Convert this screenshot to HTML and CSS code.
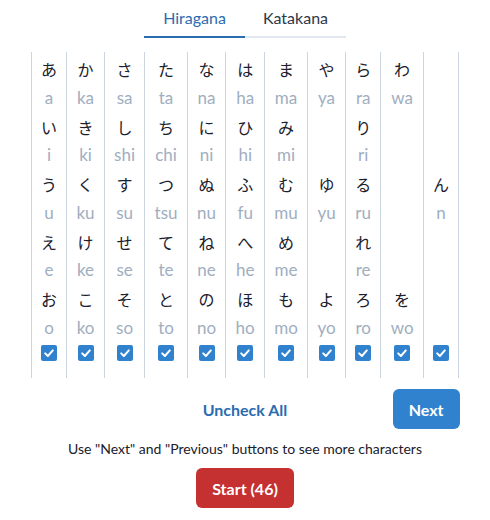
FILE: index.html
```html
<!DOCTYPE html>
<html lang="ja">
<head>
<meta charset="utf-8">
<link rel="stylesheet" href="styles.css">
</head>
<body>
<div class="app">
  <div class="tabs">
    <div class="tab active">Hiragana</div>
    <div class="tab">Katakana</div>
  </div>

  <div class="grid">
    <div class="col">
      <div class="cell"><span class="kana">あ</span><span class="romaji">a</span></div>
      <div class="cell"><span class="kana">い</span><span class="romaji">i</span></div>
      <div class="cell"><span class="kana">う</span><span class="romaji">u</span></div>
      <div class="cell"><span class="kana">え</span><span class="romaji">e</span></div>
      <div class="cell"><span class="kana">お</span><span class="romaji">o</span></div>
      <span class="check"><svg viewBox="0 0 16 16"><path d="M4.2 8.4 L6.9 11 L11.8 5.4"/></svg></span>
    </div>
    <div class="col">
      <div class="cell"><span class="kana">か</span><span class="romaji">ka</span></div>
      <div class="cell"><span class="kana">き</span><span class="romaji">ki</span></div>
      <div class="cell"><span class="kana">く</span><span class="romaji">ku</span></div>
      <div class="cell"><span class="kana">け</span><span class="romaji">ke</span></div>
      <div class="cell"><span class="kana">こ</span><span class="romaji">ko</span></div>
      <span class="check"><svg viewBox="0 0 16 16"><path d="M4.2 8.4 L6.9 11 L11.8 5.4"/></svg></span>
    </div>
    <div class="col">
      <div class="cell"><span class="kana">さ</span><span class="romaji">sa</span></div>
      <div class="cell"><span class="kana">し</span><span class="romaji">shi</span></div>
      <div class="cell"><span class="kana">す</span><span class="romaji">su</span></div>
      <div class="cell"><span class="kana">せ</span><span class="romaji">se</span></div>
      <div class="cell"><span class="kana">そ</span><span class="romaji">so</span></div>
      <span class="check"><svg viewBox="0 0 16 16"><path d="M4.2 8.4 L6.9 11 L11.8 5.4"/></svg></span>
    </div>
    <div class="col">
      <div class="cell"><span class="kana">た</span><span class="romaji">ta</span></div>
      <div class="cell"><span class="kana">ち</span><span class="romaji">chi</span></div>
      <div class="cell"><span class="kana">つ</span><span class="romaji">tsu</span></div>
      <div class="cell"><span class="kana">て</span><span class="romaji">te</span></div>
      <div class="cell"><span class="kana">と</span><span class="romaji">to</span></div>
      <span class="check"><svg viewBox="0 0 16 16"><path d="M4.2 8.4 L6.9 11 L11.8 5.4"/></svg></span>
    </div>
    <div class="col">
      <div class="cell"><span class="kana">な</span><span class="romaji">na</span></div>
      <div class="cell"><span class="kana">に</span><span class="romaji">ni</span></div>
      <div class="cell"><span class="kana">ぬ</span><span class="romaji">nu</span></div>
      <div class="cell"><span class="kana">ね</span><span class="romaji">ne</span></div>
      <div class="cell"><span class="kana">の</span><span class="romaji">no</span></div>
      <span class="check"><svg viewBox="0 0 16 16"><path d="M4.2 8.4 L6.9 11 L11.8 5.4"/></svg></span>
    </div>
    <div class="col">
      <div class="cell"><span class="kana">は</span><span class="romaji">ha</span></div>
      <div class="cell"><span class="kana">ひ</span><span class="romaji">hi</span></div>
      <div class="cell"><span class="kana">ふ</span><span class="romaji">fu</span></div>
      <div class="cell"><span class="kana">へ</span><span class="romaji">he</span></div>
      <div class="cell"><span class="kana">ほ</span><span class="romaji">ho</span></div>
      <span class="check"><svg viewBox="0 0 16 16"><path d="M4.2 8.4 L6.9 11 L11.8 5.4"/></svg></span>
    </div>
    <div class="col">
      <div class="cell"><span class="kana">ま</span><span class="romaji">ma</span></div>
      <div class="cell"><span class="kana">み</span><span class="romaji">mi</span></div>
      <div class="cell"><span class="kana">む</span><span class="romaji">mu</span></div>
      <div class="cell"><span class="kana">め</span><span class="romaji">me</span></div>
      <div class="cell"><span class="kana">も</span><span class="romaji">mo</span></div>
      <span class="check"><svg viewBox="0 0 16 16"><path d="M4.2 8.4 L6.9 11 L11.8 5.4"/></svg></span>
    </div>
    <div class="col">
      <div class="cell"><span class="kana">や</span><span class="romaji">ya</span></div>
      <div class="cell"></div>
      <div class="cell"><span class="kana">ゆ</span><span class="romaji">yu</span></div>
      <div class="cell"></div>
      <div class="cell"><span class="kana">よ</span><span class="romaji">yo</span></div>
      <span class="check"><svg viewBox="0 0 16 16"><path d="M4.2 8.4 L6.9 11 L11.8 5.4"/></svg></span>
    </div>
    <div class="col">
      <div class="cell"><span class="kana">ら</span><span class="romaji">ra</span></div>
      <div class="cell"><span class="kana">り</span><span class="romaji">ri</span></div>
      <div class="cell"><span class="kana">る</span><span class="romaji">ru</span></div>
      <div class="cell"><span class="kana">れ</span><span class="romaji">re</span></div>
      <div class="cell"><span class="kana">ろ</span><span class="romaji">ro</span></div>
      <span class="check"><svg viewBox="0 0 16 16"><path d="M4.2 8.4 L6.9 11 L11.8 5.4"/></svg></span>
    </div>
    <div class="col">
      <div class="cell"><span class="kana">わ</span><span class="romaji">wa</span></div>
      <div class="cell"></div>
      <div class="cell"></div>
      <div class="cell"></div>
      <div class="cell"><span class="kana">を</span><span class="romaji">wo</span></div>
      <span class="check"><svg viewBox="0 0 16 16"><path d="M4.2 8.4 L6.9 11 L11.8 5.4"/></svg></span>
    </div>
    <div class="col">
      <div class="cell"></div>
      <div class="cell"></div>
      <div class="cell"><span class="kana">ん</span><span class="romaji">n</span></div>
      <div class="cell"></div>
      <div class="cell"></div>
      <span class="check"><svg viewBox="0 0 16 16"><path d="M4.2 8.4 L6.9 11 L11.8 5.4"/></svg></span>
    </div>
  </div>

  <div class="actions">
    <span class="spacer"></span>
    <button class="btn ghost">Uncheck All</button>
    <button class="btn primary next">Next</button>
  </div>

  <p class="hint">Use "Next" and "Previous" buttons to see more characters</p>

  <button class="btn danger">Start (46)</button>
</div>
</body>
</html>
```

FILE: styles.css
```css
* { box-sizing: border-box; }

html, body {
  margin: 0;
  padding: 0;
  background: #ffffff;
}

body {
  font-family: Lato, "Noto Sans", "Noto Sans CJK JP", sans-serif;
  color: #1a202c;
}

.app {
  display: flex;
  flex-direction: column;
  align-items: center;
}

.tabs {
  display: flex;
}

.tab {
  width: 101px;
  text-align: center;
  font-size: 16px;
  line-height: 24px;
  padding: 6px 0 6px;
  color: #2d3748;
  border-bottom: 2px solid #e2e8f0;
}

.tab.active {
  color: #2b6cb0;
  border-bottom-color: #2b6cb0;
}

.grid {
  display: flex;
  margin-top: 14px;
  border-right: 1px solid #cbd5e0;
}

.col {
  display: flex;
  flex-direction: column;
  align-items: center;
  padding: 3px 9.25px 17px;
  border-left: 1px solid #cbd5e0;
}

.cell {
  display: flex;
  flex-direction: column;
  align-items: center;
  height: 57.5px;
}

.kana {
  font-family: "Noto Sans CJK JP", sans-serif;
  font-size: 16px;
  line-height: 28.75px;
  color: #1a202c;
}

.romaji {
  font-size: 17px;
  line-height: 28.75px;
  color: #a0aec0;
}

.check {
  display: block;
  width: 16px;
  height: 16px;
  margin-top: 2.5px;
  background: #3182ce;
  border-radius: 2px;
}

.check svg {
  display: block;
  width: 16px;
  height: 16px;
  fill: none;
  stroke: #ffffff;
  stroke-width: 2;
  stroke-linecap: round;
  stroke-linejoin: round;
}

.actions {
  display: grid;
  grid-template-columns: 1fr auto 1fr;
  align-items: center;
  width: 429px;
  margin-top: 11px;
}

.next {
  justify-self: end;
}

.btn {
  font-family: Lato, "Noto Sans", sans-serif;
  font-size: 16px;
  font-weight: 700;
  height: 40px;
  padding: 0 16px;
  border: none;
  border-radius: 6px;
  cursor: pointer;
}

.ghost {
  background: transparent;
  color: #2b6cb0;
}

.primary {
  background: #3182ce;
  color: #ffffff;
}

.danger {
  background: #c53030;
  color: #ffffff;
  margin-top: 9px;
}

.hint {
  margin: 10px 0 0;
  font-size: 14px;
  line-height: 20px;
  color: #1a202c;
}
```
